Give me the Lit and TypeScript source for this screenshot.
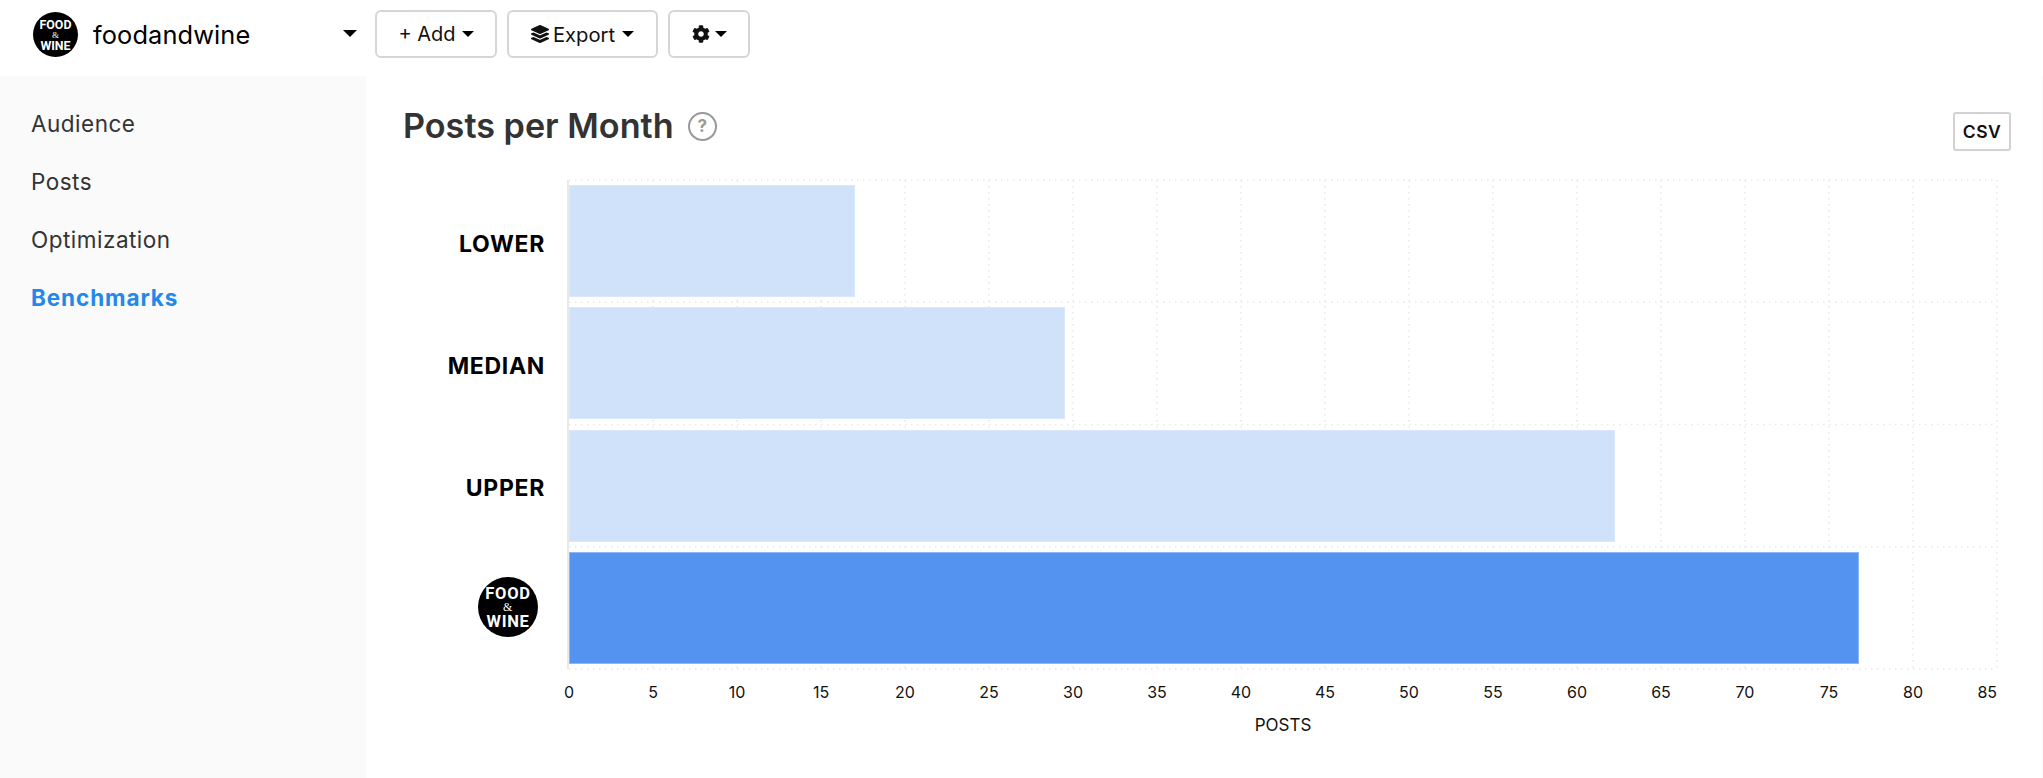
import { LitElement, html, css, svg } from "lit";
import { customElement } from "lit/decorators.js";

const COG = "M487.4 315.7l-42.6-24.6c4.3-23.2 4.3-47 0-70.2l42.6-24.6c4.9-2.8 7.1-8.6 5.5-14-11.1-35.6-30-67.8-54.7-94.6-3.8-4.1-10-5.1-14.8-2.3L380.8 110c-17.9-15.4-38.5-27.3-60.8-35.1V25.8c0-5.6-3.9-10.5-9.4-11.7-36.7-8.2-74.3-7.8-109.2 0-5.5 1.2-9.4 6.1-9.4 11.7V75c-22.2 7.9-42.8 19.8-60.8 35.1L88.7 85.5c-4.9-2.8-11-1.9-14.8 2.3-24.7 26.7-43.6 58.9-54.7 94.6-1.7 5.4.6 11.2 5.5 14L67.3 221c-4.3 23.2-4.3 47 0 70.2l-42.6 24.6c-4.9 2.8-7.1 8.6-5.5 14 11.1 35.6 30 67.8 54.7 94.6 3.8 4.1 10 5.1 14.8 2.3l42.6-24.6c17.9 15.4 38.5 27.3 60.8 35.1v49.2c0 5.6 3.9 10.5 9.4 11.7 36.7 8.2 74.3 7.8 109.2 0 5.5-1.2 9.4-6.1 9.4-11.7v-49.2c22.2-7.9 42.8-19.8 60.8-35.1l42.6 24.6c4.9 2.8 11 1.9 14.8-2.3 24.7-26.7 43.6-58.9 54.7-94.6 1.5-5.5-.7-11.3-5.6-14.1zM256 336c-44.1 0-80-35.9-80-80s35.9-80 80-80 80 35.9 80 80-35.9 80-80 80z";
const LAYERS = "M12.41 148.02l232.94 105.67c6.8 3.09 14.49 3.09 21.29 0l232.94-105.67c16.55-7.51 16.55-32.52 0-40.03L266.65 2.31a25.607 25.607 0 0 0-21.29 0L12.41 107.98c-16.55 7.51-16.55 32.53 0 40.04zm487.18 88.28l-58.09-26.33-161.64 73.27c-7.56 3.43-15.59 5.17-23.86 5.17s-16.29-1.74-23.86-5.17L70.51 209.97l-58.1 26.33c-16.55 7.5-16.55 32.5 0 40l232.94 105.59c6.8 3.08 14.49 3.08 21.29 0L499.59 276.3c16.55-7.5 16.55-32.5 0-40zm0 127.8l-57.87-26.23-161.86 73.37c-7.56 3.43-15.59 5.17-23.86 5.17s-16.29-1.74-23.86-5.17L70.29 337.87 12.41 364.1c-16.55 7.5-16.55 32.5 0 40l232.94 105.59c6.8 3.08 14.49 3.08 21.29 0L499.59 404.1c16.55-7.5 16.55-32.5 0-40z";

const MAX = 85;
const TICKS = Array.from({ length: 18 }, (_, i) => i * 5);
const ROWS = [
  { label: "LOWER", value: 17, own: false },
  { label: "MEDIAN", value: 29.5, own: false },
  { label: "UPPER", value: 62.25, own: false },
  { label: "", value: 76.8, own: true },
];
const pct = (v: number) => `${(v / MAX) * 100}%`;

@customElement("app-root")
export class AppRoot extends LitElement {
  static styles = css`
    :host {
      display: flex;
      flex-direction: column;
      height: 778px;
      overflow: hidden;
      font-family: Inter, "Liberation Sans", sans-serif;
      color: #000;
      background: #fafafa;
    }
    header {
      height: 76px;
      flex: none;
      background: #fff;
      display: flex;
      align-items: center;
    }
    .brand {
      width: 375px;
      flex: none;
      display: flex;
      align-items: center;
      padding: 0 0 7px 33px;
      box-sizing: border-box;
      height: 100%;
    }
    .logo {
      border-radius: 50%;
      background: #000;
      color: #fff;
      display: flex;
      flex-direction: column;
      align-items: center;
      justify-content: center;
      flex: none;
      font-family: Roboto, "Liberation Sans", sans-serif;
      font-weight: 700;
    }
    .logo .amp {
      font-family: "Liberation Serif", serif;
      font-weight: 400;
    }
    .logo.small { width: 45px; height: 45px; font-size: 12.4px; line-height: 11px; }
    .logo.small .amp { font-size: 9px; line-height: 10px; }
    .logo.big { width: 60px; height: 60px; font-size: 16.5px; line-height: 15px; }
    .logo.big .amp { font-size: 12px; line-height: 13px; }
    .brand .name {
      font-size: 25.4px;
      margin-left: 15px;
      letter-spacing: 0.1px;
    }
    .caret {
      display: inline-block;
      width: 0;
      height: 0;
      border-left: 6px solid transparent;
      border-right: 6px solid transparent;
      border-top: 6px solid #000;
      flex: none;
    }
    .brand .caret {
      margin-left: auto;
      margin-right: 18px;
      margin-top: -3px;
      border-left-width: 7.5px;
      border-right-width: 7.5px;
      border-top-width: 7.5px;
    }
    .btn {
      height: 48px;
      box-sizing: border-box;
      border: 2px solid #d6d6d6;
      border-radius: 6px;
      background: #fff;
      display: flex;
      align-items: center;
      justify-content: center;
      font-size: 20px;
      color: #111;
      margin: 0 10px 8px 0;
      gap: 6px;
      flex: none;
    }
    .btn.add { width: 122px; }
    .btn.export { width: 151px; gap: 4px; font-size: 20.2px; }
    .btn.export .caret { margin-left: 3px; }
    .btn.gear { width: 82px; gap: 5px; }
    .btn svg { display: block; flex: none; }
    .body {
      flex: 1;
      display: flex;
      min-height: 0;
    }
    nav {
      width: 366px;
      flex: none;
      box-sizing: border-box;
      padding: 19px 0 0 31px;
      display: flex;
      flex-direction: column;
    }
    nav a {
      display: block;
      height: 58px;
      line-height: 58px;
      font-size: 22.5px;
      color: #333;
      letter-spacing: 0.5px;
    }
    nav a.active {
      color: #2488e8;
      font-weight: 700;
      letter-spacing: 0.9px;
    }
    main {
      flex: 1;
      background: #fff;
      margin-right: 1px;
      min-width: 0;
    }
    .head {
      display: flex;
      justify-content: space-between;
      align-items: flex-start;
      padding: 30px 31px 0 37px;
      height: 46px;
    }
    .title {
      display: flex;
      align-items: center;
      height: 40px;
      gap: 14px;
    }
    h1 {
      margin: 0;
      font-size: 34.2px;
      line-height: 40px;
      font-weight: 600;
      color: #333;
    }
    .help {
      width: 29px;
      height: 29px;
      box-sizing: border-box;
      border: 2px solid #999;
      border-radius: 50%;
      color: #999;
      font-size: 17px;
      font-weight: 700;
      display: flex;
      align-items: center;
      justify-content: center;
    }
    .csv {
      width: 58px;
      height: 39px;
      margin-top: 6px;
      box-sizing: border-box;
      border: 2px solid #d2d2d2;
      border-radius: 3px;
      display: flex;
      align-items: center;
      justify-content: center;
      font-size: 17.5px;
      font-weight: 600;
      letter-spacing: 0.5px;
      color: #111;
    }
    .chart {
      margin-top: 28px;
      display: grid;
      grid-template-columns: 179px 1428px;
      column-gap: 24px;
    }
    .labels {
      display: grid;
      grid-template-rows: repeat(4, 122.25px);
    }
    .label {
      display: flex;
      align-items: center;
      justify-content: flex-end;
      font-size: 23px;
      font-weight: 700;
      letter-spacing: 0.7px;
      padding-top: 5px;
    }
    .label.own { padding: 0 7px 1px 0; }
    .plot {
      position: relative;
      display: grid;
      grid-template-rows: repeat(4, 122.25px);
      border-left: 2px solid #e9e9e9;
      margin-left: -2px;
    }
    .grid {
      position: absolute;
      left: 0;
      top: 0;
      width: 100%;
      height: 100%;
      overflow: visible;
    }
    .grid line {
      stroke: #e8e8e8;
      stroke-width: 1.5;
      stroke-dasharray: 1.5 4.5;
    }
    .row {
      position: relative;
      padding: 5px 0;
      box-sizing: border-box;
    }
    .bar {
      height: 112px;
      box-sizing: border-box;
      background: #d0e1fa;
      border: 1px solid #dbe8fb;
    }
    .bar.own {
      background: #5493f0;
      border-color: #8cb7f5;
    }
    .axis {
      grid-column: 2;
      position: relative;
      height: 60px;
      font-size: 16px;
      color: #111;
    }
    .tick {
      position: absolute;
      top: 13px;
      line-height: 20px;
      transform: translateX(-50%);
    }
    .tick.last { transform: translateX(-100%); }
    .axis-title {
      position: absolute;
      left: 0;
      right: 0;
      top: 46px;
      text-align: center;
      line-height: 20px;
      font-size: 17px;
    }
  `;

  private logo(size: string) {
    return html`<div class="logo ${size}">
      <span>FOOD</span><span class="amp">&amp;</span><span>WINE</span>
    </div>`;
  }

  private icon(d: string, size: number) {
    return html`<svg width=${size} height=${size} viewBox="0 0 512 512" fill="#111">
      ${svg`<path d=${d}></path>`}
    </svg>`;
  }

  render() {
    return html`
      <header>
        <div class="brand">
          ${this.logo("small")}
          <span class="name">foodandwine</span>
          <span class="caret"></span>
        </div>
        <div class="btn add"><span>+ Add</span><span class="caret"></span></div>
        <div class="btn export">
          ${this.icon(LAYERS, 18)}<span>Export</span><span class="caret"></span>
        </div>
        <div class="btn gear">${this.icon(COG, 18)}<span class="caret"></span></div>
      </header>
      <div class="body">
        <nav>
          <a>Audience</a>
          <a>Posts</a>
          <a>Optimization</a>
          <a class="active">Benchmarks</a>
        </nav>
        <main>
          <div class="head">
            <div class="title">
              <h1>Posts per Month</h1>
              <span class="help">?</span>
            </div>
            <div class="csv">CSV</div>
          </div>
          <div class="chart">
            <div class="labels">
              ${ROWS.map((r) =>
                r.own
                  ? html`<div class="label own">${this.logo("big")}</div>`
                  : html`<div class="label">${r.label}</div>`
              )}
            </div>
            <div class="plot">
              <svg class="grid" preserveAspectRatio="none">
                ${TICKS.slice(1).map(
                  (t) =>
                    svg`<line x1=${pct(t)} x2=${pct(t)} y1="0" y2="100%"></line>`
                )}
                ${[0, 1, 2, 3, 4].map(
                  (i) =>
                    svg`<line x1="0" x2="100%" y1=${`${i * 25}%`} y2=${`${i * 25}%`}></line>`
                )}
              </svg>
              ${ROWS.map(
                (r) => html`<div class="row">
                  <div
                    class="bar ${r.own ? "own" : ""}"
                    style="width:${pct(r.value)}"
                  ></div>
                </div>`
              )}
            </div>
            <div class="axis">
              ${TICKS.map(
                (t) =>
                  html`<span
                    class="tick ${t === MAX ? "last" : ""}"
                    style="left:${pct(t)}"
                    >${t}</span
                  >`
              )}
              <div class="axis-title">POSTS</div>
            </div>
          </div>
        </main>
      </div>
    `;
  }
}
